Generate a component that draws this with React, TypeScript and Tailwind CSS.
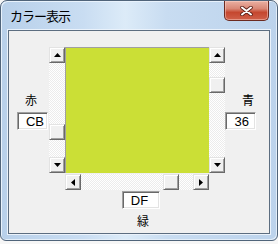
import React from "react";

const raised =
  "bg-[#f0f0f0] border border-t-[#e3e3e3] border-l-[#e3e3e3] border-b-[#696969] border-r-[#696969] shadow-[inset_1px_1px_0_#ffffff,inset_-1px_-1px_0_#a0a0a0]";
const track =
  "bg-[image:repeating-conic-gradient(#ffffff_0_25%,#ececec_0_50%)] bg-[length:2px_2px]";

function Arrow({ dir }: { dir: "up" | "down" | "left" | "right" }) {
  const pts =
    dir === "up"
      ? "3.5,0 7,4 0,4"
      : dir === "down"
      ? "0,0 7,0 3.5,4"
      : dir === "left"
      ? "4,0 4,7 0,3.5"
      : "0,0 4,3.5 0,7";
  const w = dir === "up" || dir === "down" ? 7 : 4;
  const h = dir === "up" || dir === "down" ? 4 : 7;
  return (
    <svg width={w} height={h} viewBox={`0 0 ${w} ${h}`}>
      <polygon points={pts} fill="#000" />
    </svg>
  );
}

function Btn({ dir }: { dir: "up" | "down" | "left" | "right" }) {
  return (
    <div className={`w-[16px] h-[16px] shrink-0 flex items-center justify-center ${raised}`}>
      <Arrow dir={dir} />
    </div>
  );
}

function VScroll({ thumb }: { thumb: string }) {
  return (
    <div className="w-[16px] h-[126px] flex flex-col shrink-0">
      <Btn dir="up" />
      <div className={`flex-1 flex flex-col ${track}`}>
        <div className={`${thumb} w-[16px] h-[16px] ${raised}`} />
      </div>
      <Btn dir="down" />
    </div>
  );
}

function Box({ text, cls }: { text: string; cls: string }) {
  return (
    <div
      className={`${cls} h-[18px] bg-white border border-t-[#a0a0a0] border-l-[#a0a0a0] border-b-white border-r-white shadow-[inset_1px_1px_0_#696969,inset_-1px_-1px_0_#e3e3e3] flex items-center text-[13px] leading-none text-black font-['Liberation_Sans',sans-serif]`}
    >
      {text}
    </div>
  );
}

export default function App() {
  return (
    <div className="w-[278px] h-[244px] bg-[#f6f6f6] overflow-hidden font-['Noto_Sans_CJK_JP',sans-serif]">
      <div className="w-[278px] h-[241px] flex flex-col rounded-t-[7px] rounded-b-[6px] border border-[#50647a] bg-[linear-gradient(90deg,#b8d0ea_0%,#c9ddf2_30%,#dcebf8_45%,#c8dcf1_60%,#bcd3ec_100%)] shadow-[inset_1px_1px_0_#e8f2fc,inset_-1px_-1px_0_#e3eef9]">
        <div className="h-[29px] flex shrink-0">
          <div className="pl-[9px] h-[29px] flex items-center text-[13px] leading-none tracking-[-1px] text-black">
            カラー表示
          </div>
          <div className="ml-auto mr-[8px] w-[45px] h-[20px] rounded-b-[5px] border border-t-0 border-[#6b2a20] bg-[linear-gradient(180deg,#eab0a2_0%,#d98877_40%,#c5472f_60%,#d0604a_100%)] shadow-[inset_0_0_0_1px_rgba(255,220,210,0.45)] flex items-center justify-center">
            <svg width="13" height="10" viewBox="0 0 13 10" className="mt-[1px]">
              <path d="M2 1.5 L11 8.5 M11 1.5 L2 8.5" stroke="#5a1f17" strokeWidth="3.6" strokeLinecap="round" />
              <path d="M2 1.5 L11 8.5 M11 1.5 L2 8.5" stroke="#ffffff" strokeWidth="2" strokeLinecap="round" />
            </svg>
          </div>
        </div>
        <div className="mx-[7px] h-[204px] shrink-0 border border-[#5c6d80] bg-[#f0f0f0] shadow-[0_0_0_1px_#eaf2fb] flex flex-col pt-[16px] text-[12px] text-black">
          <div className="flex h-[126px]">
            <div className="w-[40px] flex flex-col shrink-0">
              <div className="mt-[46px] pl-[16px] leading-[14px] h-[14px]">赤</div>
              <Box text="CB" cls="mt-[5px] ml-[8px] w-[31px] justify-end pr-[3px]" />
            </div>
            <VScroll thumb="mt-[61px]" />
            <div className="w-[144px] h-[126px] bg-[#CBDF36] border-t border-l border-[#a0a0a0] shrink-0" />
            <VScroll thumb="mt-[14px]" />
            <div className="flex flex-col">
              <div className="mt-[46px] pl-[17px] leading-[14px] h-[14px]">青</div>
              <Box text="36" cls="mt-[5px] w-[31px] justify-end pr-[6px]" />
            </div>
          </div>
          <div className="ml-[56px] mt-[1px] w-[144px] h-[16px] flex">
            <Btn dir="left" />
            <div className={`flex-1 flex ${track}`}>
              <div className={`ml-[82px] w-[16px] h-[16px] ${raised}`} />
            </div>
            <Btn dir="right" />
          </div>
          <Box text="DF" cls="ml-[113px] mt-[1px] w-[38px] justify-center pr-[3px]" />
          <div className="ml-[128px] mt-[5px] leading-[14px]">緑</div>
        </div>
      </div>
    </div>
  );
}
